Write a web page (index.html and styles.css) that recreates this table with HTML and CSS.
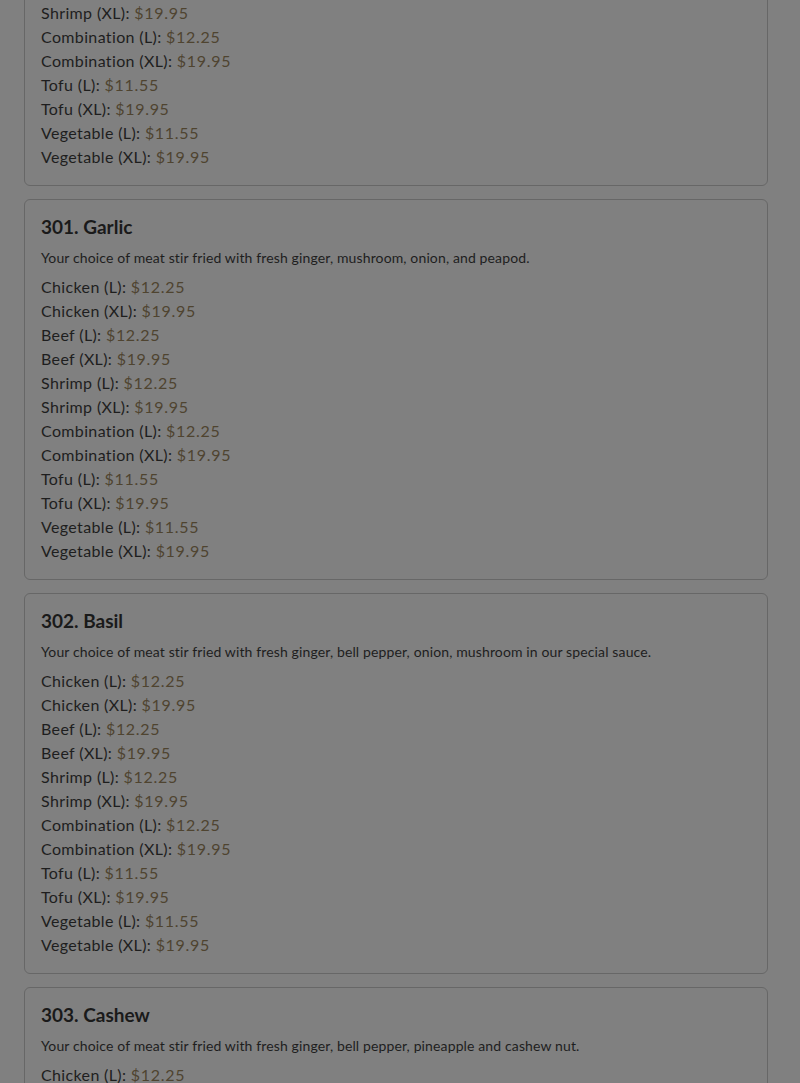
FILE: index.html
```html
<!DOCTYPE html>
<html>
<head>
<meta charset="utf-8">
<link rel="stylesheet" href="styles.css">
</head>
<body>
<div class="menu">
  <div class="card">
    <h3 class="title">300. Ginger</h3>
    <p class="desc">Your choice of meat stir fried with fresh ginger, mushroom, onion, and peapod.</p>
    <ul class="prices">
      <li>Chicken (L): <span class="price">$12.25</span></li>
      <li>Chicken (XL): <span class="price">$19.95</span></li>
      <li>Beef (L): <span class="price">$12.25</span></li>
      <li>Beef (XL): <span class="price">$19.95</span></li>
      <li>Shrimp (L): <span class="price">$12.25</span></li>
      <li>Shrimp (XL): <span class="price">$19.95</span></li>
      <li>Combination (L): <span class="price">$12.25</span></li>
      <li>Combination (XL): <span class="price">$19.95</span></li>
      <li>Tofu (L): <span class="price">$11.55</span></li>
      <li>Tofu (XL): <span class="price">$19.95</span></li>
      <li>Vegetable (L): <span class="price">$11.55</span></li>
      <li>Vegetable (XL): <span class="price">$19.95</span></li>
    </ul>
  </div>
  <div class="card">
    <h3 class="title">301. Garlic</h3>
    <p class="desc">Your choice of meat stir fried with fresh ginger, mushroom, onion, and peapod.</p>
    <ul class="prices">
      <li>Chicken (L): <span class="price">$12.25</span></li>
      <li>Chicken (XL): <span class="price">$19.95</span></li>
      <li>Beef (L): <span class="price">$12.25</span></li>
      <li>Beef (XL): <span class="price">$19.95</span></li>
      <li>Shrimp (L): <span class="price">$12.25</span></li>
      <li>Shrimp (XL): <span class="price">$19.95</span></li>
      <li>Combination (L): <span class="price">$12.25</span></li>
      <li>Combination (XL): <span class="price">$19.95</span></li>
      <li>Tofu (L): <span class="price">$11.55</span></li>
      <li>Tofu (XL): <span class="price">$19.95</span></li>
      <li>Vegetable (L): <span class="price">$11.55</span></li>
      <li>Vegetable (XL): <span class="price">$19.95</span></li>
    </ul>
  </div>
  <div class="card">
    <h3 class="title">302. Basil</h3>
    <p class="desc">Your choice of meat stir fried with fresh ginger, bell pepper, onion, mushroom in our special sauce.</p>
    <ul class="prices">
      <li>Chicken (L): <span class="price">$12.25</span></li>
      <li>Chicken (XL): <span class="price">$19.95</span></li>
      <li>Beef (L): <span class="price">$12.25</span></li>
      <li>Beef (XL): <span class="price">$19.95</span></li>
      <li>Shrimp (L): <span class="price">$12.25</span></li>
      <li>Shrimp (XL): <span class="price">$19.95</span></li>
      <li>Combination (L): <span class="price">$12.25</span></li>
      <li>Combination (XL): <span class="price">$19.95</span></li>
      <li>Tofu (L): <span class="price">$11.55</span></li>
      <li>Tofu (XL): <span class="price">$19.95</span></li>
      <li>Vegetable (L): <span class="price">$11.55</span></li>
      <li>Vegetable (XL): <span class="price">$19.95</span></li>
    </ul>
  </div>
  <div class="card">
    <h3 class="title">303. Cashew</h3>
    <p class="desc">Your choice of meat stir fried with fresh ginger, bell pepper, pineapple and cashew nut.</p>
    <ul class="prices">
      <li>Chicken (L): <span class="price">$12.25</span></li>
      <li>Chicken (XL): <span class="price">$19.95</span></li>
      <li>Beef (L): <span class="price">$12.25</span></li>
      <li>Beef (XL): <span class="price">$19.95</span></li>
      <li>Shrimp (L): <span class="price">$12.25</span></li>
      <li>Shrimp (XL): <span class="price">$19.95</span></li>
      <li>Combination (L): <span class="price">$12.25</span></li>
      <li>Combination (XL): <span class="price">$19.95</span></li>
      <li>Tofu (L): <span class="price">$11.55</span></li>
      <li>Tofu (XL): <span class="price">$19.95</span></li>
      <li>Vegetable (L): <span class="price">$11.55</span></li>
      <li>Vegetable (XL): <span class="price">$19.95</span></li>
    </ul>
  </div>
</div>
</body>
</html>
```
FILE: styles.css
```css
html, body {
  margin: 0;
  padding: 0;
  background: #808080;
}
body {
  font-family: "Lato", "Open Sans", sans-serif;
  color: #1e1e1e;
  overflow: hidden;
}
.menu {
  display: flex;
  flex-direction: column;
  gap: 13px;
  padding: 0 32px 0 24px;
  margin-top: -195px;
}
.card {
  border: 1px solid #676767;
  border-radius: 6px;
  padding: 16px;
  background: #808080;
}
.title {
  margin: 0 0 10px;
  font-size: 19px;
  line-height: 22px;
  font-weight: 700;
  color: #1a1a1a;
}
.desc {
  margin: 0 0 7px;
  font-size: 14px;
  line-height: 20px;
  letter-spacing: 0.13px;
  color: #1e1e1e;
}
.prices {
  list-style: none;
  margin: 0;
  padding: 0;
}
.prices li {
  font-size: 16px;
  line-height: 24px;
  letter-spacing: 0.36px;
}
.price {
  color: #4f4430;
  letter-spacing: 0.7px;
}
```
